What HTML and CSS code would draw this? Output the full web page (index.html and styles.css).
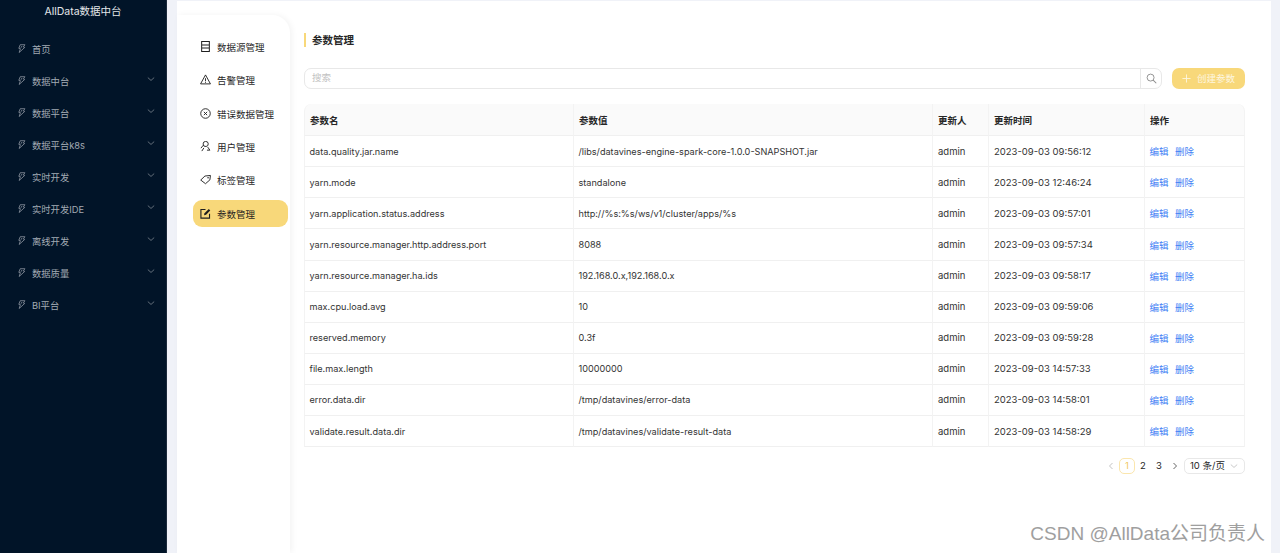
FILE: index.html
```html
<!DOCTYPE html>
<html lang="zh">
<head>
<meta charset="utf-8">
<title>参数管理</title>
<link rel="stylesheet" href="styles.css">
</head>
<body>
<svg class="defs" width="0" height="0" aria-hidden="true">
  <symbol id="bolt" viewBox="0 0 10 10"><path d="M3.6 .8 8.8 .8 7 3.4 8.6 3.8 2.4 9.4 3.8 5.2 2 4.8Z M5.6 2.2 4.4 4.2" fill="none" stroke="currentColor" stroke-width=".9"/></symbol>
  <symbol id="chev" viewBox="0 0 10 10"><path d="M1 3.2 5 6.8 9 3.2" fill="none" stroke="currentColor" stroke-width="1"/></symbol>
</svg>
<div class="app">
  <aside class="sidebar">
    <div class="logo">AllData数据中台</div>
    <ul class="menu">
      <li class="menu-item"><svg class="bolt"><use href="#bolt"/></svg><span class="menu-label">首页</span></li>
      <li class="menu-item"><svg class="bolt"><use href="#bolt"/></svg><span class="menu-label">数据中台</span><svg class="chev"><use href="#chev"/></svg></li>
      <li class="menu-item"><svg class="bolt"><use href="#bolt"/></svg><span class="menu-label">数据平台</span><svg class="chev"><use href="#chev"/></svg></li>
      <li class="menu-item"><svg class="bolt"><use href="#bolt"/></svg><span class="menu-label">数据平台k8s</span><svg class="chev"><use href="#chev"/></svg></li>
      <li class="menu-item"><svg class="bolt"><use href="#bolt"/></svg><span class="menu-label">实时开发</span><svg class="chev"><use href="#chev"/></svg></li>
      <li class="menu-item"><svg class="bolt"><use href="#bolt"/></svg><span class="menu-label">实时开发IDE</span><svg class="chev"><use href="#chev"/></svg></li>
      <li class="menu-item"><svg class="bolt"><use href="#bolt"/></svg><span class="menu-label">离线开发</span><svg class="chev"><use href="#chev"/></svg></li>
      <li class="menu-item"><svg class="bolt"><use href="#bolt"/></svg><span class="menu-label">数据质量</span><svg class="chev"><use href="#chev"/></svg></li>
      <li class="menu-item"><svg class="bolt"><use href="#bolt"/></svg><span class="menu-label">BI平台</span><svg class="chev"><use href="#chev"/></svg></li>
    </ul>
  </aside>
  <div class="page">
    <nav class="subnav">
      <a class="sub-item"><svg class="sub-icon" viewBox="0 0 12 12"><path d="M1.8 .6H10.2V11.4H1.8Z M1.8 4.4H10.2 M1.8 7.6H10.2" fill="none" stroke="currentColor" stroke-width="1.1"/></svg>数据源管理</a>
      <a class="sub-item"><svg class="sub-icon" viewBox="0 0 12 12"><path d="M6 1 11.4 10.8H.6Z M6 4.6V7.6 M6 8.4V9.6" fill="none" stroke="currentColor" stroke-width="1"/></svg>告警管理</a>
      <a class="sub-item"><svg class="sub-icon" viewBox="0 0 12 12"><circle cx="6" cy="6" r="5.2" fill="none" stroke="currentColor" stroke-width="1"/><path d="M4.2 4.2 7.8 7.8 M7.8 4.2 4.2 7.8" fill="none" stroke="currentColor" stroke-width="1"/></svg>错误数据管理</a>
      <a class="sub-item"><svg class="sub-icon" viewBox="0 0 12 12"><path d="M1 7.8 3.6 4.6 M3.4 3.2A2.8 2.8 0 1 1 6.6 6 2.8 2.8 0 0 1 3.4 3.2Z M2 11 4.2 7.6 M8.4 6.6 10.8 10 M7.6 10H10.8" fill="none" stroke="currentColor" stroke-width="1"/></svg>用户管理</a>
      <a class="sub-item"><svg class="sub-icon" viewBox="0 0 12 12"><path d="M.8 6.6 5.4 2.2 11.4 1.6 10.8 6.4 6 10.6Z" fill="none" stroke="currentColor" stroke-width="1"/><circle cx="8.8" cy="4.2" r=".8" fill="currentColor"/></svg>标签管理</a>
      <a class="sub-item active"><svg class="sub-icon" viewBox="0 0 12 12"><path d="M10.4 6.4V11H1V1.6H6" fill="none" stroke="currentColor" stroke-width="1.2"/><path d="M4.4 7.8 4.9 5.6 9.6 1 11.2 2.6 6.6 7.3Z" fill="currentColor"/></svg>参数管理</a>
    </nav>
    <main class="content">
      <h1 class="title">参数管理</h1>
      <div class="toolbar">
        <div class="search">
          <span class="search-input">搜索</span>
          <span class="search-btn"><svg width="11" height="11" viewBox="0 0 12 12"><circle cx="5" cy="5" r="3.8" fill="none" stroke="currentColor" stroke-width="1"/><path d="M7.8 7.8 11.2 11.2" stroke="currentColor" stroke-width="1.1"/></svg></span>
        </div>
        <button class="create"><svg width="9" height="9" viewBox="0 0 10 10"><path d="M5 .5V9.5 M.5 5H9.5" stroke="currentColor" stroke-width="1"/></svg>创建参数</button>
      </div>
      <table class="grid">
        <colgroup><col class="c1"><col class="c2"><col class="c3"><col class="c4"><col class="c5"></colgroup>
        <thead><tr><th>参数名</th><th>参数值</th><th>更新人</th><th>更新时间</th><th>操作</th></tr></thead>
        <tbody>
          <tr><td class="txt">data.quality.jar.name</td><td class="txt">/libs/datavines-engine-spark-core-1.0.0-SNAPSHOT.jar</td><td>admin</td><td>2023-09-03 09:56:12</td><td class="ops"><a class="act">编辑</a><a class="act">删除</a></td></tr>
          <tr><td class="txt">yarn.mode</td><td class="txt">standalone</td><td>admin</td><td>2023-09-03 12:46:24</td><td class="ops"><a class="act">编辑</a><a class="act">删除</a></td></tr>
          <tr><td class="txt">yarn.application.status.address</td><td class="txt">http://%s:%s/ws/v1/cluster/apps/%s</td><td>admin</td><td>2023-09-03 09:57:01</td><td class="ops"><a class="act">编辑</a><a class="act">删除</a></td></tr>
          <tr><td class="txt">yarn.resource.manager.http.address.port</td><td class="txt">8088</td><td>admin</td><td>2023-09-03 09:57:34</td><td class="ops"><a class="act">编辑</a><a class="act">删除</a></td></tr>
          <tr><td class="txt">yarn.resource.manager.ha.ids</td><td class="txt">192.168.0.x,192.168.0.x</td><td>admin</td><td>2023-09-03 09:58:17</td><td class="ops"><a class="act">编辑</a><a class="act">删除</a></td></tr>
          <tr><td class="txt">max.cpu.load.avg</td><td class="txt">10</td><td>admin</td><td>2023-09-03 09:59:06</td><td class="ops"><a class="act">编辑</a><a class="act">删除</a></td></tr>
          <tr><td class="txt">reserved.memory</td><td class="txt">0.3f</td><td>admin</td><td>2023-09-03 09:59:28</td><td class="ops"><a class="act">编辑</a><a class="act">删除</a></td></tr>
          <tr><td class="txt">file.max.length</td><td class="txt">10000000</td><td>admin</td><td>2023-09-03 14:57:33</td><td class="ops"><a class="act">编辑</a><a class="act">删除</a></td></tr>
          <tr><td class="txt">error.data.dir</td><td class="txt">/tmp/datavines/error-data</td><td>admin</td><td>2023-09-03 14:58:01</td><td class="ops"><a class="act">编辑</a><a class="act">删除</a></td></tr>
          <tr><td class="txt">validate.result.data.dir</td><td class="txt">/tmp/datavines/validate-result-data</td><td>admin</td><td>2023-09-03 14:58:29</td><td class="ops"><a class="act">编辑</a><a class="act">删除</a></td></tr>
        </tbody>
      </table>
      <div class="pager">
        <svg class="arrow off" viewBox="0 0 8 10"><path d="M5.5 2 2.5 5 5.5 8" fill="none" stroke="currentColor"/></svg>
        <span class="pg on">1</span><span class="pg">2</span><span class="pg">3</span>
        <svg class="arrow" viewBox="0 0 8 10"><path d="M2.5 2 5.5 5 2.5 8" fill="none" stroke="currentColor"/></svg>
        <span class="size">10 条/页<svg class="size-chev"><use href="#chev"/></svg></span>
      </div>
    </main>
  </div>
</div>
<div class="watermark">CSDN @AllData公司负责人</div>
</body>
</html>
```
FILE: styles.css
```css
* { box-sizing: border-box; }
html, body { margin: 0; height: 100%; overflow: hidden; }
body {
  background: #f0f2f8;
  font-family: "Inter", "Noto Sans CJK SC", sans-serif;
  font-size: 9.5px;
  color: #262626;
}
.defs { position: absolute; }
.app { display: flex; height: 553px; }

.sidebar { width: 167px; flex: none; background: #011428; border-right: 1px solid #1c2a3c; }
.logo {
  height: 24px; line-height: 24px; text-align: center; color: #e4e7ea;
  font-size: 10.5px; margin: 0 0 9px;
}
.menu { list-style: none; margin: 0; padding: 0; }
.menu-item { display: flex; align-items: center; height: 32px; padding: 0 11px 0 17px; color: #a3abb4; font-size: 9.3px; }
.menu-label { flex: 1; margin-left: 6px; }
.bolt { width: 9px; height: 9px; color: #8d95a0; margin-top: -2px; flex: none; }
.chev { width: 8px; height: 8px; color: #7c858f; margin-top: -4px; }

.page {
  margin: 1px 9px 0 10px; flex: 1; background: #fff; display: flex; min-width: 0;
}
.subnav {
  width: 113px; flex: none; margin-top: 14px; padding: 18.4px 2px 0 16px;
  border-radius: 0 18px 0 0; box-shadow: 2px 0 6px rgba(0, 0, 0, .05);
  display: flex; flex-direction: column; gap: 6.4px;
}
.sub-item {
  display: flex; align-items: center; height: 27px; border-radius: 9px; padding-left: 7px;
  color: #1f1f1f; font-size: 9.5px;
}
.sub-icon { width: 11px; height: 11px; margin-right: 6px; flex: none; margin-top: -1px; }
.sub-item.active { background: #f8d87a; }

.content { flex: 1; min-width: 0; padding: 0 26px 0 14px; }
.title {
  margin: 32px 0 0; height: 14px; line-height: 16px; padding-left: 6px;
  border-left: 2px solid #f8d87a; font-size: 10.5px; font-weight: 600; color: #262626;
}
.toolbar { display: flex; justify-content: space-between; align-items: center; margin-top: 20px; height: 22px; }
.search {
  width: 858px; height: 21px; display: flex; border: 1px solid #e8e8e8; border-radius: 7px;
}
.search-input { flex: 1; padding-left: 7px; line-height: 17px; color: #c2c2c2; }
.search-btn {
  width: 21px; display: flex; align-items: center; justify-content: center;
  border-left: 1px solid #e8e8e8; color: #8c8c8c;
}
.create {
  width: 73px; height: 21px; border: 0; border-radius: 7px; background: #f8d87a; color: #fdf6e0;
  font: inherit; display: flex; align-items: center; justify-content: center; gap: 6px; padding: 0;
}

.grid {
  width: 941px; margin-top: 15px; border-collapse: separate; border-spacing: 0; table-layout: fixed;
}
.c1 { width: 269px; } .c2 { width: 359px; } .c3 { width: 56px; } .c4 { width: 156px; } .c5 { width: 101px; }
.grid th, .grid td {
  padding: 0 5px; text-align: left; border-bottom: 1px solid #f0f0f0; border-left: 1px solid #f3f3f3;
  white-space: nowrap; overflow: hidden; color: #333;
}
.grid th { height: 32.2px; background: #fafafa; font-weight: 600; color: #262626; padding-top: 1px; }
.grid td { height: 31.1px; }
.grid td.txt { font-size: 9.15px; padding-left: 4.5px; }
.grid td.ops { padding-left: 4.5px; }
.grid tr > :last-child { border-right: 1px solid #f3f3f3; }
.grid th:first-child { border-top-left-radius: 7px; }
.grid th:last-child { border-top-right-radius: 7px; }
.act { color: #3f7ff5; margin-right: 6.5px; }

.pager { display: flex; justify-content: flex-end; align-items: center; margin-top: 11px; height: 16px; color: #262626; }
.arrow { width: 8px; height: 10px; margin: 0 4px; color: #666; }
.arrow.off { color: #c4c4c4; }
.pg { width: 16px; height: 16px; line-height: 14px; text-align: center; border: 1px solid transparent; border-radius: 5px; }
.pg.on { border-color: #fbe6ad; color: #f0c862; }
.size {
  width: 61px; height: 16px; line-height: 14px; border: 1px solid #e8e8e8; border-radius: 5px;
  padding-left: 5px; margin-left: 1px; display: flex; align-items: center; gap: 5px;
}
.size-chev { width: 8px; height: 8px; color: #bdbdbd; }

.watermark {
  position: absolute; right: 15px; top: 523px; font-family: "Liberation Sans", "Noto Sans CJK SC", sans-serif;
  font-size: 19px; line-height: 22px; color: #959595; opacity: .9;
}
```
